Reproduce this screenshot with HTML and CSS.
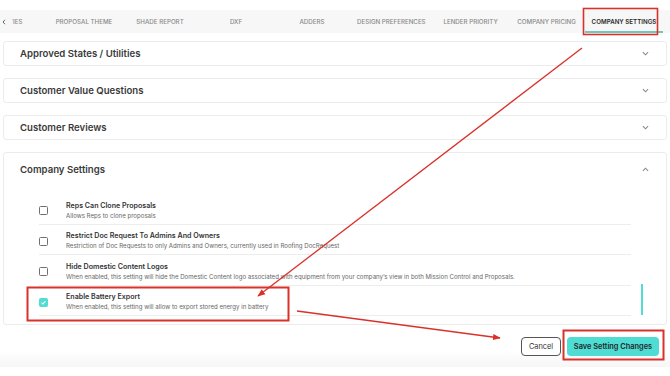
FILE: index.html
```html
<!DOCTYPE html>
<html>
<head>
<meta charset="utf-8">
<link rel="stylesheet" href="styles.css">
</head>
<body>
<div class="page">
  <div class="tabbar">
    <span class="tab-prev"><svg viewBox="0 0 4 6"><path d="M3 0.8 L1 3 L3 5.2"/></svg></span>
    <div class="tabs-clip">
      <div class="tabs">
        <div class="tab">UTILITIES</div>
        <div class="tab">PROPOSAL THEME</div>
        <div class="tab">SHADE REPORT</div>
        <div class="tab">DXF</div>
        <div class="tab">ADDERS</div>
        <div class="tab">DESIGN PREFERENCES</div>
        <div class="tab">LENDER PRIORITY</div>
        <div class="tab">COMPANY PRICING</div>
        <div class="tab active">COMPANY SETTINGS</div>
      </div>
    </div>
  </div>

  <div class="cards">
    <div class="card">
      <div class="card-head"><span>Approved States / Utilities</span><svg class="chev" viewBox="0 0 8 5"><path d="M1 1 L4 4 L7 1"/></svg></div>
    </div>
    <div class="card">
      <div class="card-head"><span>Customer Value Questions</span><svg class="chev" viewBox="0 0 8 5"><path d="M1 1 L4 4 L7 1"/></svg></div>
    </div>
    <div class="card">
      <div class="card-head"><span>Customer Reviews</span><svg class="chev" viewBox="0 0 8 5"><path d="M1 1 L4 4 L7 1"/></svg></div>
    </div>
    <div class="card open">
      <div class="card-head big"><span>Company Settings</span><svg class="chev" viewBox="0 0 8 5"><path d="M1 4 L4 1 L7 4"/></svg></div>
      <div class="settings-wrap">
        <div class="settings">
          <div class="row">
            <span class="cb"></span>
            <div class="txt"><div class="t">Reps Can Clone Proposals</div><div class="d">Allows Reps to clone proposals</div></div>
          </div>
          <div class="row">
            <span class="cb"></span>
            <div class="txt"><div class="t">Restrict Doc Request To Admins And Owners</div><div class="d">Restriction of Doc Requests to only Admins and Owners, currently used in Roofing DocRequest</div></div>
          </div>
          <div class="row">
            <span class="cb"></span>
            <div class="txt"><div class="t">Hide Domestic Content Logos</div><div class="d">When enabled, this setting will hide the Domestic Content logo associated with equipment from your company’s view in both Mission Control and Proposals.</div></div>
          </div>
          <div class="row">
            <span class="cb checked"><svg viewBox="0 0 10 10"><path d="M2.3 5.2 L4.2 7 L7.8 3.2"/></svg></span>
            <div class="txt"><div class="t">Enable Battery Export</div><div class="d">When enabled, this setting will allow to export stored energy in battery</div></div>
          </div>
        </div>
        <div class="scrollbar"><div class="thumb"></div></div>
      </div>
    </div>
  </div>

  <div class="footer">
    <button class="btn cancel">Cancel</button>
    <button class="btn save">Save Setting Changes</button>
  </div>

  <svg class="annot" viewBox="0 0 670 376" width="670" height="376">
    <defs>
      <marker id="ah" viewBox="0 0 10 10" refX="9" refY="5" markerWidth="6" markerHeight="6" orient="auto-start-reverse">
        <path d="M0 1 L10 5 L0 9 z" fill="#d8322b"/>
      </marker>
    </defs>
    <rect x="583.5" y="8.5" width="74" height="26" fill="none" stroke="#d8322b" stroke-width="1.6"/>
    <rect x="27.5" y="287.5" width="261" height="33" fill="none" stroke="#d8322b" stroke-width="2"/>
    <rect x="563.5" y="330.5" width="100" height="29" fill="none" stroke="#d8322b" stroke-width="2"/>
    <line x1="582" y1="48" x2="258" y2="296" stroke="#d8322b" stroke-width="1.3" marker-end="url(#ah)"/>
    <line x1="297" y1="311" x2="500" y2="338" stroke="#d8322b" stroke-width="1.3" marker-end="url(#ah)"/>
  </svg>
</div>
</body>
</html>
```
FILE: styles.css
```css
* { box-sizing: border-box; }
html, body { margin: 0; padding: 0; background: #fff; }
body { font-family: Inter, "Open Sans", "Liberation Sans", sans-serif; color: #333; }
.page { position: relative; width: 670px; height: 376px; overflow: hidden; }

.tabbar {
  margin-top: 10px;
  height: 23px;
  background: #f7f7f7;
  display: flex;
  align-items: stretch;
}
.tab-prev {
  width: 12px;
  flex: none;
  display: flex;
  align-items: center;
  padding-left: 2px;
}
.tab-prev svg { width: 4px; height: 6px; fill: none; stroke: #666; stroke-width: 1; }
.tabs-clip { flex: 1; overflow: hidden; }
.tabs { display: flex; margin-left: -42px; height: 100%; }
.tab {
  min-width: 76px;
  padding: 2px 7px 0;
  display: flex;
  align-items: center;
  justify-content: center;
  white-space: nowrap;
  font-size: 6.2px;
  font-weight: 500;
  color: #8a8a8a;
  border-bottom: 2px solid transparent;
}
.tab.active {
  color: #2a2a2a;
  font-weight: 600;
  border-bottom-color: #6fc7bd;
}

.cards {
  margin: 8px 3px 0;
  display: flex;
  flex-direction: column;
  gap: 12px;
}
.card {
  border: 1px solid #ececec;
  border-radius: 3px;
  background: #fff;
}
.card-head {
  height: 23px;
  display: flex;
  align-items: center;
  justify-content: space-between;
  padding: 0 17px 0 16px;
  font-size: 9.6px;
  font-weight: 600;
  color: #3a3a3a;
}
.card-head.big { height: 32px; }
.chev { width: 7px; height: 5px; fill: none; stroke: #888; stroke-width: 1.2; }

.settings-wrap {
  display: flex;
  padding: 9px 0 8px 35px;
}
.settings { width: 592px; }
.row {
  height: 30.5px;
  display: flex;
  align-items: center;
  gap: 18px;
  border-bottom: 1px solid #ededed;
}
.cb {
  width: 9px;
  height: 9px;
  border: 1.4px solid #707070;
  border-radius: 1.5px;
  flex: none;
  margin-top: 4px;
  display: flex;
}
.cb.checked { background: #52dcd3; border-color: #52dcd3; }
.cb svg { width: 100%; height: 100%; fill: none; stroke: #fff; stroke-width: 1.5; }
.txt { display: flex; flex-direction: column; gap: 2px; margin-top: 2px; }
.t { font-size: 7.1px; font-weight: 600; color: #333; white-space: nowrap; }
.d { font-size: 6.1px; color: #666; white-space: nowrap; }
.scrollbar { margin-left: 10px; position: relative; width: 2px; }
.thumb { margin-top: 90px; width: 2px; height: 31px; background: #52dcd3; }

.footer {
  margin-top: 12px;
  height: 30px;
  display: flex;
  justify-content: flex-end;
  align-items: flex-start;
  gap: 6px;
  padding-right: 11px;
  background: linear-gradient(to bottom, #fff 0%, #fff 45%, #f6f6f6 100%);
}
.btn {
  height: 19px;
  font-family: inherit;
  font-size: 7.4px;
  border-radius: 4px;
  cursor: pointer;
  padding: 0;
}
.cancel { width: 40px; background: #fff; border: 1px solid #555; color: #333; }
.save { width: 92px; background: #4fdcd2; border: none; color: #1f2a2a; font-weight: 600; }

.annot { position: absolute; left: 0; top: 0; pointer-events: none; }
```
